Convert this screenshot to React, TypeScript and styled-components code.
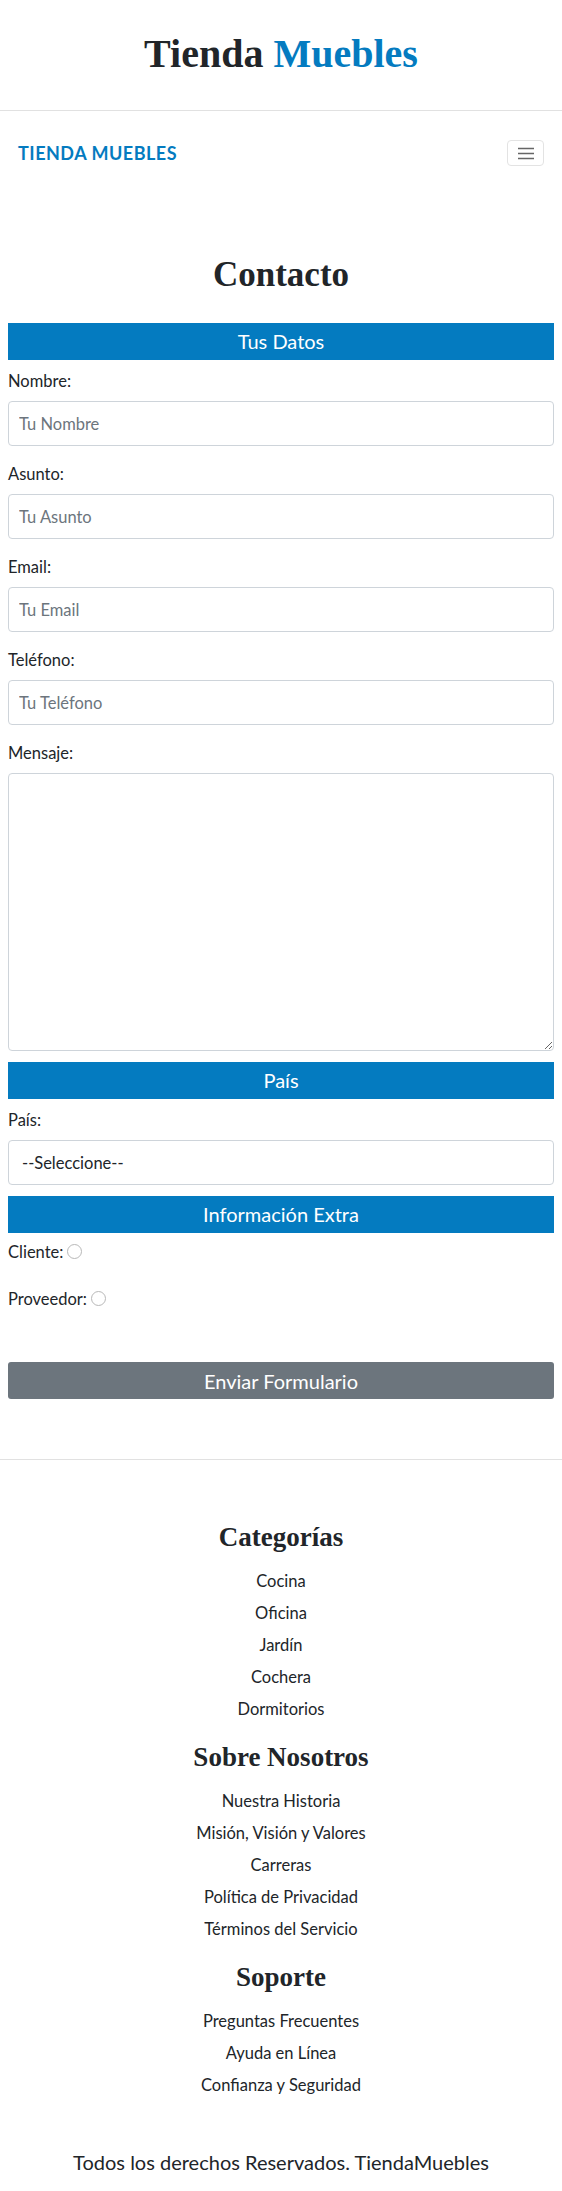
import React from "react";
import styled, { createGlobalStyle } from "styled-components";

const GlobalStyle = createGlobalStyle`
    * { box-sizing: border-box; }
    body {
        margin: 0;
        font-family: Lato, "Open Sans", sans-serif;
        font-size: 16.5px;
        color: #212529;
        background: #fff;
    }
`;

const BLUE = "#047bc0";

const SiteHeader = styled.header`
    padding: 30px 0 32px;
    border-bottom: 1px solid #e1e1e1;
    text-align: center;
`;

const SiteTitle = styled.h1`
    margin: 0;
    font-family: "Liberation Serif", serif;
    font-weight: 700;
    font-size: 40px;
    line-height: 48px;
    span { color: ${BLUE}; }
`;

const NavBar = styled.nav`
    display: flex;
    align-items: center;
    justify-content: space-between;
    padding: 29px 18px 0;
`;

const Brand = styled.a`
    font-weight: 700;
    font-size: 18px;
    letter-spacing: 0.5px;
    color: ${BLUE};
    text-decoration: none;
    text-transform: uppercase;
`;

const Toggler = styled.button`
    display: flex;
    align-items: center;
    justify-content: center;
    width: 37px;
    height: 26px;
    padding: 0;
    background: #fff;
    border: 1px solid #e3e3e3;
    border-radius: 4px;
`;

const Main = styled.main`
    padding: 0 8px;
`;

const PageTitle = styled.h2`
    margin: 88px 0 27px;
    text-align: center;
    font-family: "Liberation Serif", serif;
    font-weight: 700;
    font-size: 35px;
    line-height: 42px;
`;

const Legend = styled.div`
    height: 37px;
    line-height: 37px;
    background: ${BLUE};
    color: #fff;
    text-align: center;
    font-size: 20px;
`;

const Field = styled.div<{ $first?: boolean }>`
    margin-top: ${(p) => (p.$first ? "9px" : "16px")};
`;

const Label = styled.label`
    display: block;
    line-height: 24px;
    margin-bottom: 8px;
`;

const Input = styled.input`
    display: block;
    width: 100%;
    height: 45px;
    padding: 0 10px;
    font: inherit;
    color: #212529;
    border: 1px solid #ced4da;
    border-radius: 4px;
    &::placeholder { color: #6c757d; }
`;

const TextArea = styled.textarea`
    display: block;
    width: 100%;
    height: 278px;
    margin: 0 0 11px;
    padding: 8px 10px;
    font: inherit;
    border: 1px solid #ced4da;
    border-radius: 4px;
`;

const Select = styled.select`
    display: block;
    width: 100%;
    height: 45px;
    margin-bottom: 11px;
    padding: 0 13px;
    font: inherit;
    color: #212529;
    background: #fff;
    border: 1px solid #ced4da;
    border-radius: 4px;
    appearance: none;
`;

const RadioRow = styled.div<{ $first?: boolean }>`
    margin-top: ${(p) => (p.$first ? "7px" : "23px")};
    line-height: 24px;
`;

const Radio = styled.input`
    appearance: none;
    width: 15px;
    height: 15px;
    margin: 0 0 0 4px;
    border: 1px solid #b8b8b8;
    border-radius: 50%;
    vertical-align: baseline;
    position: relative;
    top: 1px;
`;

const Submit = styled.button`
    display: block;
    width: 100%;
    height: 37px;
    margin-top: 51px;
    background: #6c757d;
    color: #fff;
    border: none;
    border-radius: 3px;
    font: inherit;
    font-size: 20px;
`;

const Footer = styled.footer`
    margin-top: 60px;
    padding-top: 61px;
    border-top: 1px solid #e1e1e1;
    text-align: center;
`;

const FooterSection = styled.section`
    margin-bottom: 20px;
`;

const FooterHeading = styled.h3`
    margin: 0 0 16px;
    font-family: "Liberation Serif", serif;
    font-weight: 700;
    font-size: 27px;
    line-height: 32px;
`;

const FooterLink = styled.a`
    display: block;
    line-height: 24px;
    margin-bottom: 8px;
    color: #212529;
    text-decoration: none;
`;

const Copyright = styled.p`
    margin: 51px 0 0;
    padding-bottom: 14px;
    font-size: 20px;
    line-height: 28px;
`;

const footerSections = [
    { title: "Categorías", links: ["Cocina", "Oficina", "Jardín", "Cochera", "Dormitorios"] },
    {
        title: "Sobre Nosotros",
        links: ["Nuestra Historia", "Misión, Visión y Valores", "Carreras", "Política de Privacidad", "Términos del Servicio"],
    },
    { title: "Soporte", links: ["Preguntas Frecuentes", "Ayuda en Línea", "Confianza y Seguridad"] },
];

const fields = [
    { label: "Nombre", placeholder: "Tu Nombre" },
    { label: "Asunto", placeholder: "Tu Asunto" },
    { label: "Email", placeholder: "Tu Email" },
    { label: "Teléfono", placeholder: "Tu Teléfono" },
];

const App: React.FC = () => {
    return (
        <>
            <GlobalStyle />
            <SiteHeader>
                <SiteTitle>
                    Tienda <span>Muebles</span>
                </SiteTitle>
            </SiteHeader>
            <NavBar>
                <Brand href="#">Tienda Muebles</Brand>
                <Toggler aria-label="menu">
                    <svg width="16" height="13" viewBox="0 0 16 13">
                        <path d="M0 1.5h16M0 6.5h16M0 11.5h16" stroke="#666" strokeWidth="1.3" />
                    </svg>
                </Toggler>
            </NavBar>
            <Main>
                <PageTitle>Contacto</PageTitle>
                <form>
                    <Legend>Tus Datos</Legend>
                    {fields.map((f, i) => (
                        <Field key={f.label} $first={i === 0}>
                            <Label>{f.label}:</Label>
                            <Input placeholder={f.placeholder} />
                        </Field>
                    ))}
                    <Field>
                        <Label>Mensaje:</Label>
                        <TextArea />
                    </Field>
                    <Legend>País</Legend>
                    <Field $first>
                        <Label>País:</Label>
                        <Select defaultValue="">
                            <option value="">--Seleccione--</option>
                        </Select>
                    </Field>
                    <Legend>Información Extra</Legend>
                    <RadioRow $first>
                        Cliente:<Radio type="radio" name="tipo" />
                    </RadioRow>
                    <RadioRow>
                        Proveedor:<Radio type="radio" name="tipo" />
                    </RadioRow>
                    <Submit type="button">Enviar Formulario</Submit>
                </form>
            </Main>
            <Footer>
                {footerSections.map((s) => (
                    <FooterSection key={s.title}>
                        <FooterHeading>{s.title}</FooterHeading>
                        {s.links.map((l) => (
                            <FooterLink key={l} href="#">{l}</FooterLink>
                        ))}
                    </FooterSection>
                ))}
                <Copyright>Todos los derechos Reservados. TiendaMuebles</Copyright>
            </Footer>
        </>
    );
};

export default App;
